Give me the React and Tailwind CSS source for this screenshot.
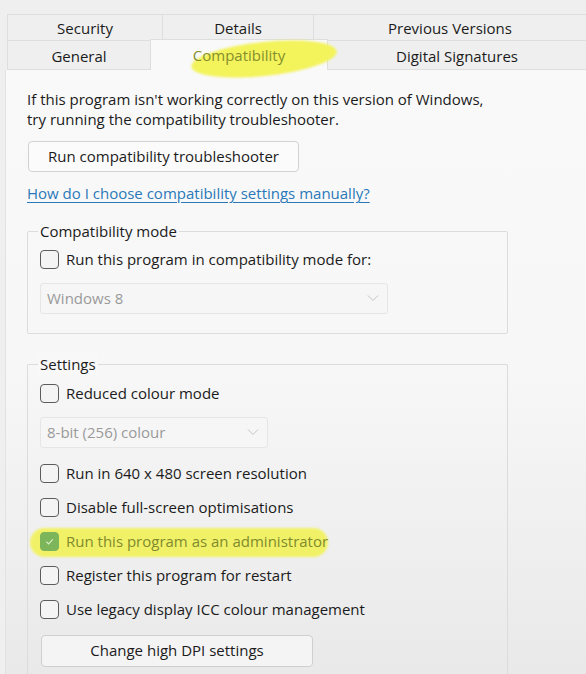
import React from 'react';

const font = { fontFamily: '"Open Sans", "Noto Sans", sans-serif' };

function Box({ checked, green }) {
    return (
        <span
            className={`w-[19px] h-[19px] rounded-[4px] border shrink-0 flex items-center justify-center ${green ? 'bg-[#7cb55a] border-[#7cb55a]' : 'bg-[#f4f4f4] border-[#5c5c5c]'}`}
        >
            {checked && (
                <svg viewBox="0 0 12 12" className="w-[11px] h-[11px]">
                    <path d="M2.5 6.2 L5 8.6 L9.6 3.6" fill="none" stroke="#d9edc9" strokeWidth="1.3" />
                </svg>
            )}
        </span>
    );
}

function Check({ label, checked, highlight }) {
    return (
        <div className="relative flex items-center gap-[7px] h-[34px]">
            {highlight && (
                <span className="absolute left-[-10px] top-[3px] w-[298px] h-[29px] rounded-full bg-[#f2f25a] opacity-90 blur-[1px]" />
            )}
            <span className="relative">
                <Box checked={checked} green={highlight} />
            </span>
            <span className={`relative text-[15px] ${highlight ? 'text-[#7f8a2c]' : 'text-[#1b1b1b]'}`}>{label}</span>
        </div>
    );
}

function Select({ value, width }) {
    return (
        <div className={`${width} h-[31px] border border-[#e6e6e6] bg-[#f6f6f6] rounded-[3px] flex items-center justify-between px-[6px] text-[15px] text-[#9a9a9a]`}>
            <span>{value}</span>
            <svg viewBox="0 0 12 8" className="w-[12px] h-[8px] mr-[2px]">
                <path d="M1 1.5 L6 6.5 L11 1.5" fill="none" stroke="#c4c4c4" strokeWidth="1" />
            </svg>
        </div>
    );
}

function Group({ title, children, className }) {
    return (
        <div className={`relative border border-[#dcdcdc] rounded-[2px] ${className}`}>
            <span className="absolute left-[10px] top-[-12px] bg-[#f8f8f8] px-[2px] text-[15px] text-[#1b1b1b]">{title}</span>
            {children}
        </div>
    );
}

export default function App() {
    const tabs1 = [
        { name: 'Security', w: 'w-[155px]' },
        { name: 'Details', w: 'w-[151px]' },
        { name: 'Previous Versions', w: 'flex-1' },
    ];

    return (
        <div className="w-[586px] h-[674px] overflow-hidden bg-[#efefef] text-[#1b1b1b]" style={font}>
            {/* tabs */}
            <div className="pt-[14px] pl-[7px]">
                <div className="flex h-[27px] border-t border-[#dedede]">
                    {tabs1.map((t) => (
                        <div key={t.name} className={`${t.w} flex items-center justify-center border-l border-b border-[#dedede] text-[15px] pt-[2px]`}>
                            {t.name}
                        </div>
                    ))}
                </div>
                <div className="flex h-[29px] items-stretch">
                    <div className="w-[143px] flex items-center justify-center border-l border-b border-[#dedede] text-[15px] pt-[2px]">General</div>
                    <div className="relative w-[178px] -mt-[2px] flex items-center justify-center bg-[#f9f9f9] border-x border-t border-[#dedede] text-[15px]">
                        <span className="absolute left-[40px] top-[2px] w-[146px] h-[34px] rounded-[50%] bg-[#f3f35c] -rotate-6 blur-[1px]" />
                        <span className="relative text-[#858f2c]">Compatibility</span>
                    </div>
                    <div className="flex-1 flex items-center justify-center border-b border-[#dedede] text-[15px] pt-[2px]">Digital Signatures</div>
                </div>
            </div>

            {/* panel */}
            <div className="ml-[5px] h-[604px] border-l border-[#e2e2e2] bg-gradient-to-b from-[#f9f9f9] via-[#f7f7f7] to-[#e9e9e9] pl-[21px] pt-[19px]">
                <p className="text-[15px] leading-[20px]">
                    If this program isn't working correctly on this version of Windows,<br />
                    try running the compatibility troubleshooter.
                </p>
                <button className="mt-[12px] ml-[1px] w-[271px] h-[31px] rounded-[4px] border border-[#d2d2d2] bg-[#fbfbfb] text-[15px] text-[#1b1b1b]">
                    Run compatibility troubleshooter
                </button>
                <div className="mt-[10px] text-[15px] text-[#2a78b8] underline underline-offset-[3px]">
                    How do I choose compatibility settings manually?
                </div>

                <Group title="Compatibility mode" className="mt-[26px] w-[481px] h-[103px] pl-[12px] pt-[11px]">
                    <Check label="Run this program in compatibility mode for:" />
                    <div className="mt-[6px]">
                        <Select value="Windows 8" width="w-[348px]" />
                    </div>
                </Group>

                <Group title="Settings" className="mt-[30px] w-[481px] h-[340px] pl-[12px] pt-[12px] border-b-0">
                    <Check label="Reduced colour mode" />
                    <div className="mt-[6px] mb-[9px]">
                        <Select value="8-bit (256) colour" width="w-[228px]" />
                    </div>
                    <Check label="Run in 640 x 480 screen resolution" />
                    <Check label="Disable full-screen optimisations" />
                    <Check label="Run this program as an administrator" checked highlight />
                    <Check label="Register this program for restart" />
                    <Check label="Use legacy display ICC colour management" />
                    <button className="mt-[8px] ml-[1px] w-[272px] h-[32px] rounded-[4px] border border-[#cfcfcf] bg-[#f4f4f4] text-[15px] text-[#1b1b1b]">
                        Change high DPI settings
                    </button>
                </Group>
            </div>
        </div>
    );
}
